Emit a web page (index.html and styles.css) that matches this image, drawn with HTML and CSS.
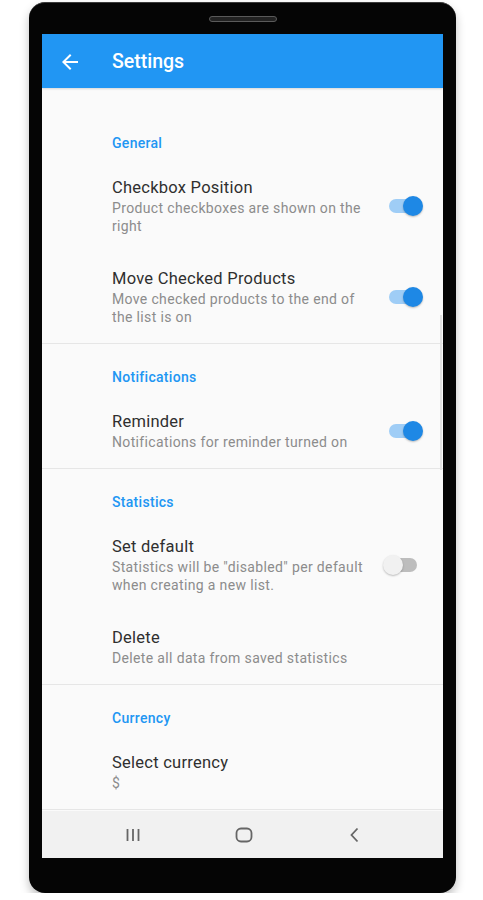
FILE: index.html
```html
<!DOCTYPE html>
<html lang="en">
<head>
<meta charset="UTF-8">
<meta name="viewport" content="width=device-width, initial-scale=1.0">
<title>Settings</title>
<link rel="stylesheet" href="styles.css">
</head>
<body>

<div class="phone">
    <div class="speaker-bar"><div class="speaker"></div></div>

    <div class="screen">
        <!-- App bar -->
        <div class="app-bar">
            <svg class="back-icon" viewBox="0 0 24 24" width="24" height="24">
                <path d="M20 11H7.83l5.59-5.59L12 4l-8 8 8 8 1.41-1.41L7.83 13H20v-2z" fill="#ffffff"/>
            </svg>
            <span class="app-title">Settings</span>
        </div>

        <!-- Preference list -->
        <div class="content">
            <div class="section">
                <div class="section-title">General</div>
                <div class="row">
                    <div class="row-text">
                        <div class="row-title">Checkbox Position</div>
                        <div class="row-summary">Product checkboxes are shown on the right</div>
                    </div>
                    <div class="switch on"><span class="track"></span><span class="thumb"></span></div>
                </div>
                <div class="row">
                    <div class="row-text">
                        <div class="row-title">Move Checked Products</div>
                        <div class="row-summary">Move checked products to the end of the list is on</div>
                    </div>
                    <div class="switch on"><span class="track"></span><span class="thumb"></span></div>
                </div>
            </div>

            <div class="section">
                <div class="section-title">Notifications</div>
                <div class="row">
                    <div class="row-text">
                        <div class="row-title">Reminder</div>
                        <div class="row-summary">Notifications for reminder turned on</div>
                    </div>
                    <div class="switch on"><span class="track"></span><span class="thumb"></span></div>
                </div>
            </div>

            <div class="section">
                <div class="section-title">Statistics</div>
                <div class="row">
                    <div class="row-text">
                        <div class="row-title">Set default</div>
                        <div class="row-summary">Statistics will be "disabled" per default when creating a new list.</div>
                    </div>
                    <div class="switch"><span class="track"></span><span class="thumb"></span></div>
                </div>
                <div class="row">
                    <div class="row-text">
                        <div class="row-title">Delete</div>
                        <div class="row-summary">Delete all data from saved statistics</div>
                    </div>
                </div>
            </div>

            <div class="section">
                <div class="section-title">Currency</div>
                <div class="row">
                    <div class="row-text">
                        <div class="row-title">Select currency</div>
                        <div class="row-summary">$</div>
                    </div>
                </div>
            </div>
        </div>

        <div class="scrollbar"></div>

        <!-- System navigation -->
        <div class="nav-bar">
            <svg viewBox="0 0 16 16" width="16" height="16">
                <path d="M2.5 2v12M8 2v12M13.5 2v12" stroke="#666" stroke-width="1.8" fill="none"/>
            </svg>
            <svg viewBox="0 0 18 16" width="18" height="16">
                <rect x="1.5" y="1.5" width="15" height="13" rx="4.5" stroke="#666" stroke-width="1.8" fill="none"/>
            </svg>
            <svg viewBox="0 0 16 16" width="16" height="16">
                <path d="M10.5 1.5L4.5 8l6 6.5" stroke="#666" stroke-width="1.8" fill="none"/>
            </svg>
        </div>
    </div>
</div>

</body>
</html>
```

FILE: styles.css
```css
body {
    margin: 0;
    background-color: #ffffff;
    font-family: Roboto, "Noto Sans", Arial, sans-serif;
}

/* Phone frame */
.phone {
    width: 427px;
    height: 891px;
    margin: 2px 0 0 29px;
    padding: 0 13px 35px;
    box-sizing: border-box;
    background-color: #050505;
    border-top: 1px solid #3c3c3c;
    border-radius: 16px;
    box-shadow: 0 5px 10px rgba(0, 0, 0, 0.25);
    display: flex;
    flex-direction: column;
}

.speaker-bar {
    height: 31px;
    display: flex;
    align-items: center;
    justify-content: center;
}

.speaker {
    width: 66px;
    height: 4px;
    background-color: #222;
    border: 1px solid #5a5a5a;
    border-radius: 3px;
}

.screen {
    position: relative;
    flex: 1;
    display: flex;
    flex-direction: column;
    background-color: #fafafa;
    overflow: hidden;
}

/* App bar */
.app-bar {
    height: 54px;
    flex-shrink: 0;
    background-color: #2196f3;
    display: flex;
    align-items: center;
    padding-left: 16px;
    box-shadow: 0 1px 2px rgba(0, 0, 0, 0.15);
}

.back-icon {
    margin-top: 1px;
}

.app-title {
    margin-left: 30px;
    color: #ffffff;
    font-size: 19.5px;
    font-weight: 500;
}

/* Preferences */
.content {
    flex: 1;
    overflow: hidden;
}

.section {
    border-bottom: 1px solid #e6e6e6;
}

.section-title {
    padding: 23px 0 8px 70px;
    line-height: 20px;
    font-size: 14px;
    font-weight: 500;
    letter-spacing: 0.3px;
    color: #2196f3;
}

.section:first-child .section-title {
    padding-top: 45px;
}

.row {
    display: flex;
    align-items: center;
    padding: 16px 20px 17px 70px;
}

.row-text {
    flex: 1;
    margin-right: 16px;
}

.row-title {
    font-size: 16.5px;
    line-height: 22px;
    letter-spacing: 0.25px;
    color: #2f2f2f;
}

.row-summary {
    font-size: 14px;
    line-height: 18px;
    letter-spacing: 0.35px;
    color: #8c8c8c;
}

/* Switch */
.switch {
    position: relative;
    width: 40px;
    height: 20px;
    flex-shrink: 0;
}

.track {
    position: absolute;
    left: 6px;
    top: 3px;
    width: 28px;
    height: 14px;
    border-radius: 7px;
    background-color: #bdbdbd;
}

.thumb {
    position: absolute;
    left: 0;
    top: 0;
    width: 20px;
    height: 20px;
    border-radius: 50%;
    background-color: #f1f1f1;
    box-shadow: 0 1px 2px rgba(0, 0, 0, 0.25);
}

.switch.on .track {
    background-color: #9fcdf6;
}

.switch.on .thumb {
    left: 20px;
    background-color: #1e88e5;
}

.scrollbar {
    position: absolute;
    right: 1px;
    top: 281px;
    width: 2px;
    height: 155px;
    background-color: #e2e2e2;
}

/* Navigation bar */
.nav-bar {
    height: 47px;
    flex-shrink: 0;
    background-color: #f1f1f1;
    display: grid;
    grid-template-columns: repeat(3, 111px);
    justify-content: center;
    justify-items: center;
    align-items: center;
    padding-left: 2px;
}
```
